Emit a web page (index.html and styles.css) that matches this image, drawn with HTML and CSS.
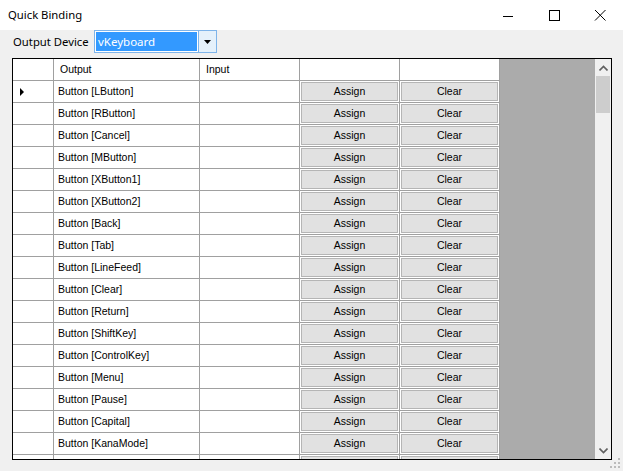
FILE: index.html
```html
<!DOCTYPE html>
<html lang="en">
<head>
  <meta charset="UTF-8"/>
  <title>Quick Binding</title>
  <link rel="stylesheet" href="styles.css">
</head>
<body>
  <div class="window">
    <div class="titlebar">
      <span class="title">Quick Binding</span>
      <div class="controls">
        <span class="ctl"><svg width="12" height="12" viewBox="0 0 12 12"><path d="M1 6.5h10" stroke="#000" fill="none"/></svg></span>
        <span class="ctl"><svg width="12" height="12" viewBox="0 0 12 12"><rect x="1.5" y="1.5" width="10" height="10" stroke="#000" fill="none"/></svg></span>
        <span class="ctl"><svg width="12" height="12" viewBox="0 0 12 12"><path d="M1 1l10.5 10.5M11.5 1L1 11.5" stroke="#000" fill="none"/></svg></span>
      </div>
    </div>

    <div class="toolbar">
      <label>Output Device</label>
      <div class="combo">
        <span class="combo-text">vKeyboard</span>
        <span class="combo-btn"><svg width="7" height="4" viewBox="0 0 7 4"><path d="M0 0h7L3.5 4z" fill="#000"/></svg></span>
      </div>
    </div>

    <div class="grid">
      <div class="grid-body">
        <div class="rows" id="rows">
          <div class="row head">
            <div class="cell rh"></div>
            <div class="cell">Output</div>
            <div class="cell">Input</div>
            <div class="cell"></div>
            <div class="cell"></div>
          </div>
        </div>
      </div>
      <div class="vscroll">
        <span class="arrow"><svg width="9" height="6" viewBox="0 0 9 6"><path d="M0.5 5.5L4.5 1.5L8.5 5.5" stroke="#606060" stroke-width="1.6" fill="none"/></svg></span>
        <div class="track"><div class="thumb"></div></div>
        <span class="arrow"><svg width="9" height="6" viewBox="0 0 9 6"><path d="M0.5 0.5L4.5 4.5L8.5 0.5" stroke="#606060" stroke-width="1.6" fill="none"/></svg></span>
      </div>
    </div>

    <svg class="grip" width="11" height="11" viewBox="0 0 11 11">
      <rect x="8" y="0" width="2" height="2" fill="#bbb"/>
      <rect x="4" y="4" width="2" height="2" fill="#bbb"/>
      <rect x="8" y="4" width="2" height="2" fill="#bbb"/>
      <rect x="0" y="8" width="2" height="2" fill="#bbb"/>
      <rect x="4" y="8" width="2" height="2" fill="#bbb"/>
      <rect x="8" y="8" width="2" height="2" fill="#bbb"/>
    </svg>
  </div>

  <script>
    const keys = ['LButton','RButton','Cancel','MButton','XButton1','XButton2','Back','Tab',
      'LineFeed','Clear','Return','ShiftKey','ControlKey','Menu','Pause','Capital','KanaMode'];

    keys.forEach((k, i) => {
      const row = document.createElement('div');
      row.className = 'row';
      row.innerHTML = `
        <div class="cell rh">${i === 0 ? '<span class="cur"></span>' : ''}</div>
        <div class="cell">Button [${k}]</div>
        <div class="cell"></div>
        <div class="cell btn-cell"><button>Assign</button></div>
        <div class="cell btn-cell"><button>Clear</button></div>`;
      rows.appendChild(row);
    });

    // next row only peeks in under the last one, labels fall below the edge
    const tail = document.createElement('div');
    tail.className = 'row';
    tail.innerHTML = `
      <div class="cell rh"></div>
      <div class="cell"></div>
      <div class="cell"></div>
      <div class="cell btn-cell"><button></button></div>
      <div class="cell btn-cell"><button></button></div>`;
    rows.appendChild(tail);
  </script>
</body>
</html>
```

FILE: styles.css
```css
* { box-sizing: border-box; margin: 0; padding: 0 }
html, body { width: 623px; height: 471px; overflow: hidden }
body {
  background: #f0f0f0;
  font-family: "Liberation Sans", Arial, sans-serif;
  color: #000;
}
.window { position: relative; height: 471px }

.titlebar {
  height: 30px;
  background: #fff;
  display: flex;
  align-items: center;
  justify-content: space-between;
}
.title {
  font-family: "Noto Sans", "Open Sans", sans-serif;
  font-size: 11.3px;
  padding-left: 8px;
  margin-top: -1px;
}
.controls { display: flex; height: 30px }
.ctl {
  width: 46px;
  display: flex;
  align-items: center;
  justify-content: center;
}
.controls .ctl:first-child { padding-top: 1px }

.toolbar {
  display: flex;
  align-items: center;
  height: 23px;
  padding-left: 13px;
  margin-bottom: 5px;
}
.toolbar label {
  font-family: "Noto Sans", "Open Sans", sans-serif;
  font-size: 11.3px;
  width: 81px;
}
.combo {
  display: flex;
  width: 123px;
  height: 23px;
  border: 1px solid #7eb4ea;
  background: #fff;
  padding: 1px;
}
.combo-text {
  flex: 1;
  background: #3399ff;
  color: #fff;
  font-family: "Noto Sans", "Open Sans", sans-serif;
  font-size: 11.5px;
  line-height: 19px;
  padding-left: 2px;
}
.combo-btn {
  width: 18px;
  margin: -1px -1px -1px 1px;
  background: #e5f1fb;
  border-left: 1px solid #7eb4ea;
  display: flex;
  align-items: center;
  justify-content: center;
}

.grid {
  margin-left: 12px;
  width: 600px;
  height: 402px;
  border: 1px solid #000;
  display: flex;
}
.grid-body {
  flex: 1;
  background: #ababab;
  overflow: hidden;
}
.rows { width: 487px }
.row {
  display: grid;
  grid-template-columns: 41px 146px 100px 100px 100px;
  height: 22px;
}
.cell {
  background: #fff;
  border-right: 1px solid #a0a0a0;
  border-bottom: 1px solid #a0a0a0;
  font-size: 10.5px;
  line-height: 21px;
  padding-left: 4px;
  white-space: nowrap;
  overflow: hidden;
}
.head .cell { padding-left: 6px; line-height: 20px }
.cell.rh { padding-left: 7px; display: flex; align-items: center }
.cur {
  width: 0; height: 0;
  border-top: 4px solid transparent;
  border-bottom: 4px solid transparent;
  border-left: 4px solid #000;
}
.btn-cell { padding: 1px }
.btn-cell button {
  display: block;
  width: 100%;
  height: 19px;
  background: #e1e1e1;
  border: 1px solid #b5b5b5;
  font-family: "Liberation Sans", Arial, sans-serif;
  font-size: 10.5px;
  line-height: 15px;
  padding-bottom: 1px;
  color: #000;
}

.vscroll {
  width: 16px;
  background: #f0f0f0;
  display: flex;
  flex-direction: column;
}
.arrow {
  height: 17px;
  display: flex;
  align-items: center;
  justify-content: center;
}
.track { flex: 1 }
.thumb {
  margin-left: 1px;
  width: 14px;
  height: 37px;
  background: #cdcdcd;
}

.grip { position: absolute; right: 2px; bottom: 2px }
```
